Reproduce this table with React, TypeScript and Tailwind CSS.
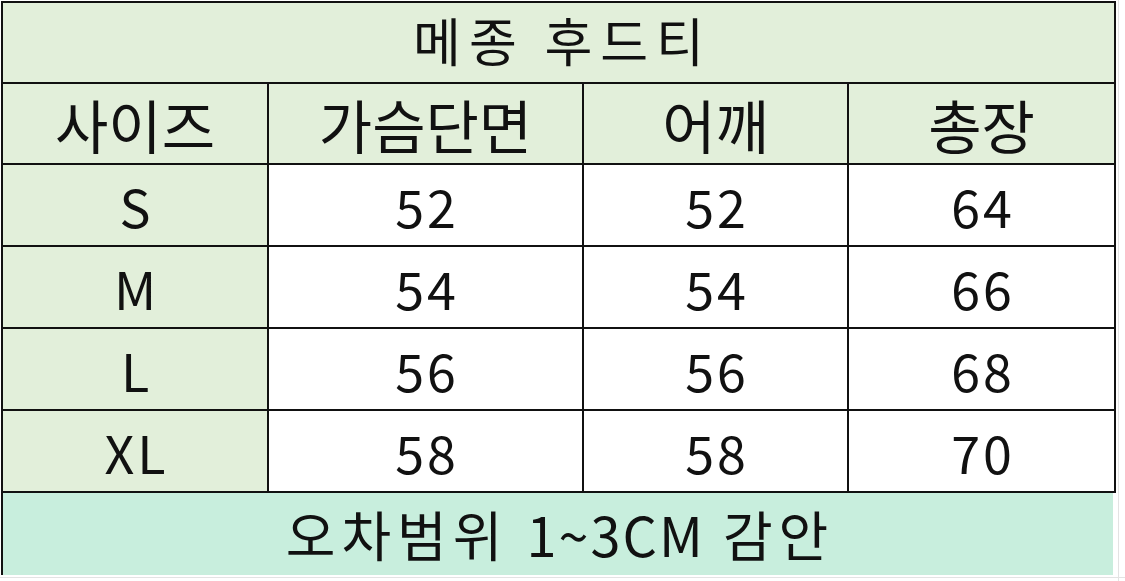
import React from "react";

const font = { fontFamily: '"Noto Sans CJK KR", "Noto Sans", sans-serif' };

const rows = [
  ["S", "52", "52", "64"],
  ["M", "54", "54", "66"],
  ["L", "56", "56", "68"],
  ["XL", "58", "58", "70"],
];

export default function App() {
  return (
    <div className="w-[1125px] h-[581px] bg-white relative overflow-hidden" style={font}>
      <div className="absolute left-[1118px] top-0 w-px h-full bg-[#e3e3e3]" />
      <div className="absolute left-0 top-[577px] w-full h-px bg-[#e3e3e3]" />
      <div className="relative ml-[1px] mt-[1px] w-[1115px]">
        <div className="grid grid-cols-[264px_313px_263px_265px] grid-rows-[79px_79px_80px_80px_80px_80px] gap-[2px] bg-[#111] p-[2px] text-[#111]">
          <div className="col-span-4 bg-[#e2efda] flex items-center justify-center text-[52px] leading-none tracking-[8px] pl-[8px] pb-[5px]">
            메종 후드티
          </div>
          {["사이즈", "가슴단면", "어깨", "총장"].map((h) => (
            <div key={h} className="bg-[#e2efda] flex items-center justify-center text-[58px] leading-none">
              {h}
            </div>
          ))}
          {rows.map((r) =>
            r.map((c, i) => (
              <div
                key={r[0] + i}
                className={`${i === 0 ? "bg-[#e2efda]" : "bg-white"} flex items-center justify-center text-[52px] leading-none tracking-[3px] pl-[3px] pt-[2px]`}
              >
                {c}
              </div>
            ))
          )}
        </div>
        <div className="w-[1112px] h-[82px] border-l-2 border-[#111] bg-[#c8eedd] flex items-center justify-center text-[54px] leading-none text-[#111] pl-[4px]">
          <span>
            <span className="tracking-[6px]">오차범위&nbsp;</span>
            <span className="tracking-[2px]">1~3CM</span>
            <span className="tracking-[6px]">&nbsp;감안</span>
          </span>
        </div>
      </div>
    </div>
  );
}
